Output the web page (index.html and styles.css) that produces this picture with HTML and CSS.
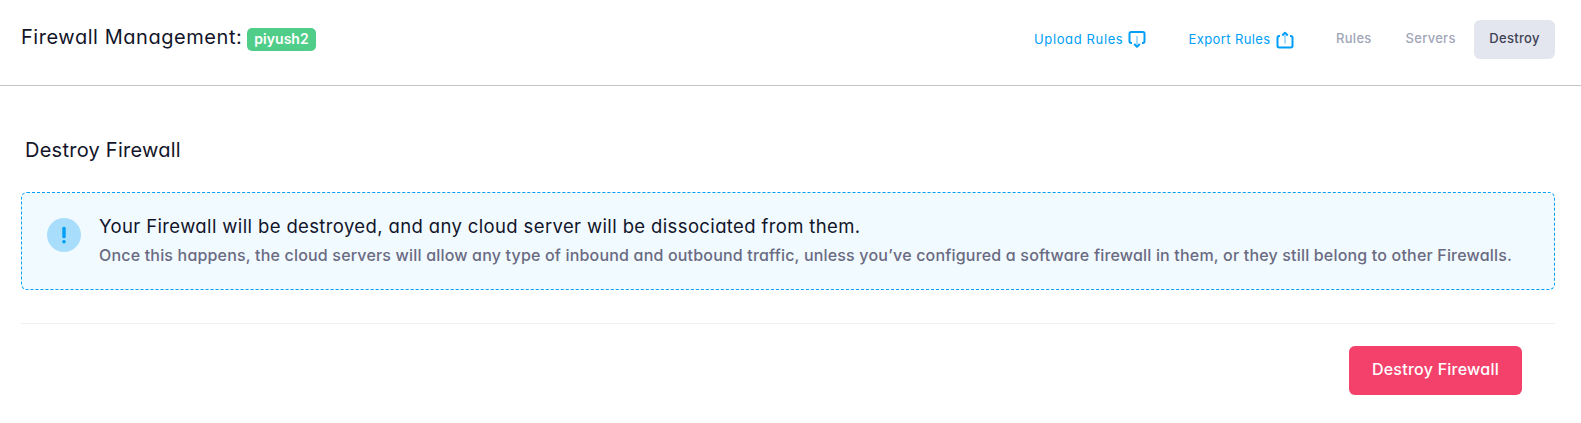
FILE: index.html
```
<!DOCTYPE html>
<html lang="en">
<head>
<meta charset="utf-8">
<title>Firewall Management</title>
<link rel="stylesheet" href="styles.css">
</head>
<body>
<header class="header">
  <h1 class="title"><span class="title-text">Firewall Management:</span><span class="badge">piyush2</span></h1>
  <nav class="nav">
    <a class="action upload"><span>Upload Rules</span>
      <svg class="icon" viewBox="0 0 18 18" fill="none" stroke="#009ef7" stroke-width="2"><path d="M4 12H3.2Q1.5 12 1.5 10.3V2.7Q1.5 1 3.2 1H14.8Q16.5 1 16.5 2.7V10.3Q16.5 12 14.8 12H14"/><path stroke="#a6dcfb" d="M9 5V13.5"/><path stroke-linejoin="round" d="M6.2 13L9 15.8L11.8 13"/></svg></a>
    <a class="action export"><span>Export Rules</span>
      <svg class="icon" viewBox="0 0 18 18" fill="none" stroke="#009ef7" stroke-width="2"><path d="M4 5H3.2Q1.5 5 1.5 6.7V14.8Q1.5 16.5 3.2 16.5H14.8Q16.5 16.5 16.5 14.8V6.7Q16.5 5 14.8 5H14"/><path stroke="#a6dcfb" d="M9 4V12.5"/><path stroke-linejoin="round" d="M6.2 4.5L9 1.8L11.8 4.5"/></svg></a>
    <a class="tab rules">Rules</a>
    <a class="tab servers">Servers</a>
    <a class="tab active">Destroy</a>
  </nav>
</header>
<main class="content">
  <h2 class="heading">Destroy Firewall</h2>
  <section class="notice">
    <svg class="notice-icon" viewBox="0 0 34 34"><circle cx="17" cy="17" r="17" fill="#a8defc"/><rect x="15.3" y="8.7" width="3.4" height="11.6" rx="1.6" fill="#009ef7"/><rect x="15.2" y="22" width="3.6" height="3.6" rx="1.8" fill="#009ef7"/></svg>
    <div>
      <h3 class="notice-title">Your Firewall will be destroyed, and any cloud server will be dissociated from them.</h3>
      <p class="notice-text">Once this happens, the cloud servers will allow any type of inbound and outbound traffic, unless you’ve configured a software firewall in them, or they still belong to other Firewalls.</p>
    </div>
  </section>
  <footer class="footer"><button class="destroy">Destroy Firewall</button></footer>
</main>
</body>
</html>
```
FILE: styles.css
```
* { box-sizing: border-box; }
body {
  margin: 0;
  height: 423px;
  overflow: hidden;
  background: #fff;
  color: #12152a;
  font-family: Inter, "Open Sans", sans-serif;
  font-feature-settings: "cv11";
  white-space: nowrap;
}
h1, h2, h3, p { margin: 0; font-weight: 400; }
.header {
  display: flex;
  justify-content: space-between;
  align-items: flex-start;
  height: 86px;
  padding: 20px 26px 0 21px;
  border-bottom: 1px solid #c4c4c8;
}
.title { display: flex; font-size: 20px; line-height: 30px; padding-top: 2px; }
.title-text { width: 226px; letter-spacing: 0.55px; }
.badge {
  width: 69px;
  height: 23px;
  margin-top: 6px;
  border-radius: 5px;
  background: #50cd89;
  color: #fff;
  font-size: 14px;
  font-weight: 600;
  line-height: 22px;
  letter-spacing: 0.05px;
  text-align: center;
}
.nav { display: flex; font-size: 13px; line-height: 39px; }
.action { display: flex; justify-content: space-between; color: #009ef7; }
.upload { width: 112px; margin-right: 42.5px; }
.export { width: 105.5px; margin-right: 42px; }
.upload span { letter-spacing: 0.63px; }
.export span { letter-spacing: 0.4px; }
.icon { width: 18px; height: 18px; margin-top: 11px; }
.tab { color: #a1a5b7; font-weight: 500; line-height: 37px; letter-spacing: 0.3px; }
.rules { width: 69.5px; }
.servers { width: 68.5px; }
.active {
  width: 81px;
  height: 39px;
  border-radius: 6px;
  background: #e4e6ef;
  color: #3f4254;
  text-align: center;
}
.content { padding: 49px 26px 0 21px; }
.heading { padding-left: 4px; font-size: 20px; line-height: 30px; letter-spacing: 0.25px; }
.notice {
  display: flex;
  gap: 18px;
  height: 98px;
  margin-top: 27px;
  padding: 18px 0 0 25px;
  border: 1px dashed #009ef7;
  border-radius: 6px;
  background: #f1faff;
}
.notice-icon { width: 34px; height: 34px; margin-top: 7px; flex: none; }
.notice-title { font-size: 18.5px; line-height: 30px; letter-spacing: 0.37px; }
.notice-text { font-size: 16px; font-weight: 500; line-height: 28px; letter-spacing: 0.18px; color: #6a6a82; }
.footer {
  display: flex;
  justify-content: flex-end;
  margin-top: 33px;
  padding: 22px 33px 0 0;
  border-top: 1px solid #eff0f2;
}
.destroy {
  width: 173px;
  height: 49px;
  padding: 0 0 2px;
  border: 0;
  border-radius: 6px;
  background: #f4416c;
  color: #fff;
  font: 500 16px/47px Inter, sans-serif;
  font-feature-settings: "cv11";
  letter-spacing: 0.25px;
}
```
